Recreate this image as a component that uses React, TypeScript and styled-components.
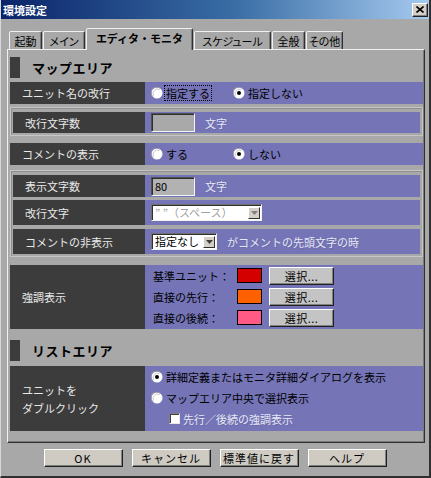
import React from 'react';
import styled, { createGlobalStyle } from 'styled-components';

const GlobalStyle = createGlobalStyle`
  html, body { margin: 0; padding: 0; background: #a8a8a8; }
  body { font-family: "Noto Sans CJK JP", "Noto Sans", sans-serif; font-size: 11px; color: #000; }
  * { box-sizing: border-box; }
`;

const PURPLE = '#7474b6';
const DARK = '#3c3c3c';
const BG = '#a8a8a8';

const Window = styled.div`
  width: 431px;
  height: 478px;
  background: ${BG};
  border-left: 1px solid #d8d8d8;
  border-right: 2px solid #303030;
  border-bottom: 2px solid #303030;
  display: flex;
  flex-direction: column;
  overflow: hidden;
`;

const TitleBar = styled.div`
  height: 19px;
  flex: none;
  background: linear-gradient(to right, #0a246a 0%, #3a6ea5 55%, #a6caf0 100%);
  display: flex;
  align-items: center;
  justify-content: space-between;
  padding: 0 1px 0 2px;
`;

const TitleText = styled.span`
  color: #fff;
  font-size: 11px;
  font-weight: bold;
`;

const CloseButton = styled.div`
  width: 16px;
  height: 14px;
  background: #d4d0c8;
  border: 1px solid;
  border-color: #fff #202020 #202020 #fff;
  box-shadow: inset -1px -1px #808080;
  display: flex;
  align-items: center;
  justify-content: center;
`;

const Body = styled.div`
  flex: 1;
  display: flex;
  flex-direction: column;
  padding: 9px 0 0 6px;
`;

const TabStrip = styled.div`
  height: 21px;
  display: flex;
  align-items: flex-end;
  padding-left: 2px;
  position: relative;
  z-index: 1;
`;

const Tab = styled.div<{ $active?: boolean; $w: number }>`
  width: ${p => p.$w}px;
  height: ${p => (p.$active ? 22 : 18)}px;
  margin-bottom: ${p => (p.$active ? -1 : 0)}px;
  margin-right: 1px;
  background: ${BG};
  border: 1px solid;
  border-bottom: none;
  border-color: #f0f0f0 #303030 transparent #f0f0f0;
  box-shadow: inset -1px 0 #7a7a7a;
  border-radius: 2px 2px 0 0;
  display: flex;
  align-items: center;
  justify-content: center;
  padding-bottom: ${p => (p.$active ? 3 : 0)}px;
  font-weight: ${p => (p.$active ? 'bold' : 'normal')};
  font-size: 11px;
  white-space: nowrap;
  font-feature-settings: ${p => (p.$active ? 'normal' : '"palt"')};
`;

const Panel = styled.div`
  width: 418px;
  height: 394px;
  border: 1px solid;
  border-color: #f0f0f0 #303030 #303030 #f0f0f0;
  box-shadow: inset -1px -1px #7a7a7a;
  padding: 7px 1px 0 2px;
  display: flex;
  flex-direction: column;
`;

const SectionHeader = styled.div<{ $mt?: number }>`
  height: 21px;
  margin-top: ${p => p.$mt ?? 0}px;
  display: flex;
  align-items: center;
  flex: none;
`;

const Marker = styled.div`
  width: 10px;
  height: 100%;
  background: ${DARK};
`;

const SectionTitle = styled.span`
  margin-left: 12px;
  font-size: 13px;
  font-weight: bold;
  letter-spacing: 0.5px;
`;

const Row = styled.div<{ $h: number; $mt?: number }>`
  height: ${p => p.$h}px;
  margin-top: ${p => p.$mt ?? 0}px;
  display: flex;
  flex: none;
`;

const Label = styled.div<{ $w: number }>`
  width: ${p => p.$w}px;
  flex: none;
  background: ${DARK};
  color: #e8e8e8;
  padding-left: 12px;
  display: flex;
  flex-direction: column;
  justify-content: center;
  line-height: 18px;
  white-space: nowrap;
`;

const Value = styled.div<{ $column?: boolean }>`
  flex: 1;
  background: ${PURPLE};
  display: flex;
  flex-direction: ${p => (p.$column ? 'column' : 'row')};
  align-items: ${p => (p.$column ? 'stretch' : 'center')};
  padding-left: 6px;
  white-space: nowrap;
`;

const Group = styled.div<{ $mt: number }>`
  margin-top: ${p => p.$mt}px;
  border: 1px solid #c6c6c6;
  box-shadow: inset 1px 1px #8e8e8e;
  padding: 4px 2px 2px 2px;
  display: flex;
  flex-direction: column;
  flex: none;
`;

const RadioOption = styled.div<{ $w?: number }>`
  width: ${p => (p.$w ? `${p.$w}px` : 'auto')};
  display: flex;
  align-items: center;
  flex: none;
`;

const OptionText = styled.span<{ $focus?: boolean }>`
  margin-left: 2px;
  padding: 0 1px;
  line-height: 14px;
  outline: ${p => (p.$focus ? '1px dotted #000' : 'none')};
`;

const Disabled = styled.span<{ $ml?: number }>`
  margin-left: ${p => p.$ml ?? 0}px;
  color: #e6e6f4;
  text-shadow: 1px 1px rgba(80, 80, 140, 0.3);
`;

const Field = styled.div<{ $bg: string }>`
  width: 44px;
  height: 19px;
  background: ${p => p.$bg};
  border: 1px solid;
  border-color: #505050 #f4f4f4 #f4f4f4 #505050;
  box-shadow: inset 1px 1px #303030;
  padding: 0 3px;
  display: flex;
  align-items: center;
  flex: none;
`;

const Select = styled.div<{ $w: number }>`
  width: ${p => p.$w}px;
  height: 17px;
  background: #fff;
  border: 1px solid;
  border-color: #707070 #f4f4f4 #f4f4f4 #707070;
  box-shadow: inset 1px 1px #303030;
  display: flex;
  align-items: center;
  justify-content: space-between;
  padding: 1px 1px 1px 3px;
  flex: none;
`;

const SelectText = styled.span<{ $disabled?: boolean }>`
  color: ${p => (p.$disabled ? '#a0a0a0' : '#000')};
  line-height: 13px;
`;

const DropButton = styled.div`
  width: 12px;
  height: 12px;
  background: #d4d0c8;
  border: 1px solid;
  border-color: #fff #303030 #303030 #fff;
  display: flex;
  align-items: center;
  justify-content: center;
`;

const ColorLine = styled.div`
  height: 21px;
  display: flex;
  align-items: center;
  padding-left: 2px;
`;

const ColorLabel = styled.span`
  width: 84px;
  flex: none;
`;

const Swatch = styled.div<{ $c: string }>`
  width: 25px;
  height: 15px;
  background: ${p => p.$c};
  border: 1px solid #000;
  flex: none;
`;

const SmallButton = styled.div`
  margin-left: 7px;
  width: 65px;
  height: 18px;
  background: #c4c4c4;
  border: 1px solid;
  border-color: #fff #202020 #202020 #fff;
  box-shadow: inset -1px -1px #808080;
  display: flex;
  align-items: center;
  justify-content: center;
  letter-spacing: 0.5px;
  flex: none;
`;

const ListLine = styled.div<{ $indent?: number }>`
  height: 21px;
  display: flex;
  align-items: center;
  padding-left: ${p => p.$indent ?? 0}px;
`;

const CheckBox = styled.div`
  width: 11px;
  height: 11px;
  background: #fff;
  border: 1px solid;
  border-color: #808080 #e8e8e8 #e8e8e8 #808080;
  box-shadow: inset 1px 1px #404040;
  margin-right: 3px;
  flex: none;
`;

const ButtonBar = styled.div`
  display: flex;
  justify-content: center;
  gap: 9px;
  margin-top: 6px;
  padding-right: 6px;
`;

const DialogButton = styled.div`
  width: 79px;
  height: 18px;
  background: #cfcbc3;
  border: 1px solid;
  border-color: #fff #202020 #202020 #fff;
  box-shadow: inset -1px -1px #808080;
  display: flex;
  align-items: center;
  justify-content: center;
  letter-spacing: 1px;
`;

const Radio: React.FC<{ checked?: boolean }> = ({ checked }) => (
  <svg width="12" height="12" viewBox="0 0 12 12" style={{ flex: 'none' }}>
    <circle cx="6" cy="6" r="5.5" fill="#fff" />
    <path d="M1.5 9.5 A5.5 5.5 0 0 1 9.5 1.5" fill="none" stroke="#9a9a9a" strokeWidth="1" />
    <path d="M2.5 8.5 A4.5 4.5 0 0 1 8.5 2.5" fill="none" stroke="#c8c8c8" strokeWidth="1" />
    {checked && <circle cx="6" cy="6" r="2" fill="#000" />}
  </svg>
);

const Arrow: React.FC<{ color?: string }> = ({ color = '#000' }) => (
  <svg width="7" height="4" viewBox="0 0 7 4">
    <path d="M0 0 H7 L3.5 4 Z" fill={color} />
  </svg>
);

export default function App() {
  return (
    <>
      <GlobalStyle />
      <Window>
        <TitleBar>
          <TitleText>環境設定</TitleText>
          <CloseButton>
            <svg width="8" height="7" viewBox="0 0 8 7">
              <path d="M0.5 0.5 L7.5 6.5 M7.5 0.5 L0.5 6.5" stroke="#000" strokeWidth="1.6" />
            </svg>
          </CloseButton>
        </TitleBar>
        <Body>
          <TabStrip>
            <Tab $w={33}>起動</Tab>
            <Tab $w={42}>メイン</Tab>
            <Tab $w={107} $active>エディタ・モニタ</Tab>
            <Tab $w={77}>スケジュール</Tab>
            <Tab $w={33}>全般</Tab>
            <Tab $w={37}>その他</Tab>
          </TabStrip>
          <Panel>
            <SectionHeader>
              <Marker />
              <SectionTitle>マップエリア</SectionTitle>
            </SectionHeader>

            <Row $h={22} $mt={4}>
              <Label $w={135}>ユニット名の改行</Label>
              <Value>
                <RadioOption $w={82}>
                  <Radio />
                  <OptionText $focus>指定する</OptionText>
                </RadioOption>
                <RadioOption>
                  <Radio checked />
                  <OptionText>指定しない</OptionText>
                </RadioOption>
              </Value>
            </Row>

            <Group $mt={3}>
              <Row $h={21}>
                <Label $w={132}>改行文字数</Label>
                <Value>
                  <Field $bg="#a9a9a9" />
                  <Disabled $ml={10}>文字</Disabled>
                </Value>
              </Row>
            </Group>

            <Row $h={22} $mt={7}>
              <Label $w={135}>コメントの表示</Label>
              <Value>
                <RadioOption $w={82}>
                  <Radio />
                  <OptionText>する</OptionText>
                </RadioOption>
                <RadioOption>
                  <Radio checked />
                  <OptionText>しない</OptionText>
                </RadioOption>
              </Value>
            </Row>

            <Group $mt={5}>
              <Row $h={22}>
                <Label $w={132}>表示文字数</Label>
                <Value>
                  <Field $bg="#b2b2b2">80</Field>
                  <Disabled $ml={10}>文字</Disabled>
                </Value>
              </Row>
              <Row $h={25} $mt={3}>
                <Label $w={132}>改行文字</Label>
                <Value>
                  <Select $w={111}>
                    <SelectText $disabled>”&nbsp;”（スペース）</SelectText>
                    <DropButton>
                      <Arrow color="#808080" />
                    </DropButton>
                  </Select>
                </Value>
              </Row>
              <Row $h={25} $mt={4}>
                <Label $w={132}>コメントの非表示</Label>
                <Value>
                  <Select $w={66}>
                    <SelectText>指定なし</SelectText>
                    <DropButton>
                      <Arrow color="#404040" />
                    </DropButton>
                  </Select>
                  <Disabled $ml={10}>がコメントの先頭文字の時</Disabled>
                </Value>
              </Row>
            </Group>

            <Row $h={64} $mt={8}>
              <Label $w={135}>強調表示</Label>
              <Value $column>
                <ColorLine>
                  <ColorLabel>基準ユニット：</ColorLabel>
                  <Swatch $c="#d40000" />
                  <SmallButton>選択...</SmallButton>
                </ColorLine>
                <ColorLine>
                  <ColorLabel>直接の先行：</ColorLabel>
                  <Swatch $c="#ff6000" />
                  <SmallButton>選択...</SmallButton>
                </ColorLine>
                <ColorLine>
                  <ColorLabel>直接の後続：</ColorLabel>
                  <Swatch $c="#ff5a86" />
                  <SmallButton>選択...</SmallButton>
                </ColorLine>
              </Value>
            </Row>

            <SectionHeader $mt={11}>
              <Marker />
              <SectionTitle>リストエリア</SectionTitle>
            </SectionHeader>

            <Row $h={65} $mt={5}>
              <Label $w={135}>
                <span>ユニットを</span>
                <span>ダブルクリック</span>
              </Label>
              <Value $column>
                <ListLine>
                  <Radio checked />
                  <OptionText>詳細定義またはモニタ詳細ダイアログを表示</OptionText>
                </ListLine>
                <ListLine>
                  <Radio />
                  <OptionText>マップエリア中央で選択表示</OptionText>
                </ListLine>
                <ListLine $indent={18}>
                  <CheckBox />
                  <Disabled>先行／後続の強調表示</Disabled>
                </ListLine>
              </Value>
            </Row>
          </Panel>
          <ButtonBar>
            <DialogButton>OK</DialogButton>
            <DialogButton>キャンセル</DialogButton>
            <DialogButton>標準値に戻す</DialogButton>
            <DialogButton>ヘルプ</DialogButton>
          </ButtonBar>
        </Body>
      </Window>
    </>
  );
}
